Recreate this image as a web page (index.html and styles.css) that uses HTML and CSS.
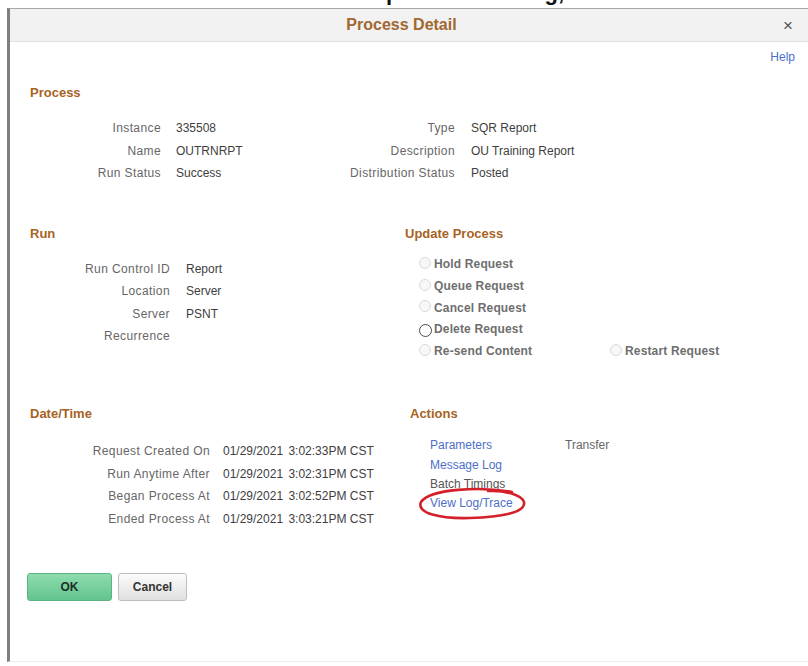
FILE: index.html
```html
<!DOCTYPE html>
<html lang="en">
<head>
<meta charset="utf-8">
<title>Process Detail</title>
<link rel="stylesheet" href="styles.css">
</head>
<body>
<div class="caption"><div class="caption-line"><span class="cap-a">p</span><span class="cap-b">g,</span></div></div>

<div class="dialog">
  <header class="dlg-head">
    <h1 class="dlg-title">Process Detail</h1>
    <button class="close" type="button">&#215;</button>
  </header>

  <div class="dlg-body">
    <div class="help-row"><a class="link" href="#">Help</a></div>

    <section class="process">
      <h2 class="sec-title">Process</h2>
      <div class="process-fields">
        <dl class="fields f-proc-l">
          <dt>Instance</dt><dd>335508</dd>
          <dt>Name</dt><dd>OUTRNRPT</dd>
          <dt>Run Status</dt><dd>Success</dd>
        </dl>
        <dl class="fields f-proc-r">
          <dt>Type</dt><dd>SQR Report</dd>
          <dt>Description</dt><dd>OU Training Report</dd>
          <dt>Distribution Status</dt><dd>Posted</dd>
        </dl>
      </div>
    </section>

    <div class="two-col row-run">
      <section class="run">
        <h2 class="sec-title">Run</h2>
        <dl class="fields f-run">
          <dt>Run Control ID</dt><dd>Report</dd>
          <dt>Location</dt><dd>Server</dd>
          <dt>Server</dt><dd>PSNT</dd>
          <dt>Recurrence</dt><dd></dd>
        </dl>
      </section>
      <section class="update">
        <h2 class="sec-title">Update Process</h2>
        <div class="radios">
          <label class="radio"><span class="dot"></span>Hold Request</label>
          <label class="radio r-full"><span class="dot"></span>Queue Request</label>
          <label class="radio r-full"><span class="dot"></span>Cancel Request</label>
          <label class="radio r-full"><span class="dot on"></span>Delete Request</label>
          <label class="radio"><span class="dot"></span>Re-send Content</label>
          <label class="radio"><span class="dot"></span>Restart Request</label>
        </div>
      </section>
    </div>

    <div class="two-col row-date">
      <section class="datetime">
        <h2 class="sec-title">Date/Time</h2>
        <dl class="fields f-date">
          <dt>Request Created On</dt><dd>01/29/2021 <span class="time">3:02:33PM CST</span></dd>
          <dt>Run Anytime After</dt><dd>01/29/2021 <span class="time">3:02:31PM CST</span></dd>
          <dt>Began Process At</dt><dd>01/29/2021 <span class="time">3:02:52PM CST</span></dd>
          <dt>Ended Process At</dt><dd>01/29/2021 <span class="time">3:03:21PM CST</span></dd>
        </dl>
      </section>
      <section class="actions">
        <h2 class="sec-title">Actions</h2>
        <div class="action-list">
          <a class="link" href="#">Parameters</a><span class="plain">Transfer</span>
          <a class="link" href="#">Message Log</a><span></span>
          <span class="plain dark">Batch Timings</span><span></span>
          <a class="link" href="#">View Log/Trace</a><span></span>
          <svg class="mark" width="114" height="38" viewBox="0 0 114 38" aria-hidden="true">
            <path d="M96 7 C64 1 14 4 5 17 C0 28 24 34 54 33 C84 32 110 28 108 17 C106 10 89 5 72 6" fill="none" stroke="#d4202a" stroke-width="2.6" stroke-linecap="round"/>
          </svg>
        </div>
      </section>
    </div>

    <div class="buttons">
      <button class="btn btn-ok" type="button">OK</button>
      <button class="btn btn-cancel" type="button">Cancel</button>
    </div>
  </div>
</div>
</body>
</html>
```
FILE: styles.css
```css
* { box-sizing: border-box; }

html, body {
  margin: 0;
  padding: 0;
  background: #fff;
}

body {
  width: 808px;
  height: 666px;
  overflow: hidden;
  font-family: "Liberation Sans", Arial, sans-serif;
  font-size: 12px;
  color: #404040;
}

/* clipped line of text above the dialog */
.caption {
  height: 8px;
  overflow: hidden;
  white-space: nowrap;
}
.caption-line {
  font-size: 22px;
  font-weight: bold;
  line-height: 22px;
  margin-top: -18px;
  color: #111;
}
.cap-a { margin-left: 386px; }
.cap-b { margin-left: 145px; }

/* dialog frame */
.dialog {
  margin-left: 7px;
  height: 654px;
  border-left: 3px solid #7f7f7f;
  border-top: 1px solid #a8a8a8;
  border-bottom: 1px solid #ececec;
}

.dlg-head {
  height: 33px;
  display: grid;
  grid-template-columns: 1fr auto 1fr;
  align-items: center;
  padding-right: 15px;
  background: #f2f2f2;
  border-bottom: 1px solid #e1e1e1;
}
.dlg-title {
  grid-column: 2;
  margin: 0;
  font-size: 16px;
  font-weight: bold;
  color: #a0672f;
}
.close {
  grid-column: 3;
  justify-self: end;
  padding: 0;
  border: 0;
  background: none;
  font-family: "Liberation Sans", Arial, sans-serif;
  font-size: 17px;
  line-height: 17px;
  color: #555;
}

.dlg-body {
  padding: 7px 13px 0 20px;
}

.link {
  color: #4d6fc7;
  text-decoration: none;
}

.help-row {
  text-align: right;
  line-height: 16px;
}

.sec-title {
  margin: 0;
  font-size: 13px;
  line-height: 16px;
  font-weight: bold;
  color: #a7631f;
}

/* label / value pairs */
.fields {
  display: grid;
  margin: 0;
  column-gap: 15px;
}
.fields dt {
  text-align: right;
  color: #666;
  letter-spacing: 0.4px;
  white-space: nowrap;
}
.fields dd {
  margin: 0;
  color: #3e3e3e;
  white-space: nowrap;
}
.time { margin-left: 2px; }

.process { margin-top: 20px; }
.process-fields {
  display: flex;
  margin-top: 16px;
}
.f-proc-l {
  width: 310px;
  grid-template-columns: 131px auto;
  line-height: 22.5px;
}
.f-proc-r {
  grid-template-columns: 115px auto;
  column-gap: 16px;
  line-height: 22.5px;
}

.two-col {
  display: grid;
  grid-template-columns: 375px 1fr;
  align-items: start;
}
.row-run { margin-top: 41px; }
.row-date { margin-top: 43px; }

.f-run {
  margin-top: 16px;
  grid-template-columns: 140px auto;
  column-gap: 16px;
  line-height: 22.6px;
}

/* update process radios */
.radios {
  display: grid;
  grid-template-columns: 191px auto;
  margin: 12.6px 0 0 14px;
  line-height: 21.75px;
}
.radio {
  display: flex;
  align-items: center;
  font-weight: bold;
  color: #6e6e6e;
  letter-spacing: 0.15px;
  white-space: nowrap;
}
.r-full { grid-column: 1 / -1; }
.dot {
  width: 12px;
  height: 12px;
  margin-right: 3px;
  border: 1px solid #dcdcdc;
  border-radius: 50%;
  background: #f7f7f7;
  transform: translateY(-2px);
}
.dot.on {
  width: 13px;
  height: 13px;
  border-color: #4a4a4a;
  background: #fff;
  margin-right: 2px;
  transform: none;
}

.f-date {
  margin-top: 18px;
  grid-template-columns: 180px auto;
  column-gap: 13px;
  line-height: 22.7px;
}

.actions { padding-left: 5px; }
.action-list {
  position: relative;
  display: grid;
  grid-template-columns: 135px auto;
  margin: 14.5px 0 0 20px;
  line-height: 19.3px;
}
.plain { color: #666; }
.plain.dark { color: #555; }
.mark {
  position: absolute;
  left: -14px;
  top: 49px;
}

/* footer buttons */
.buttons {
  display: flex;
  gap: 6px;
  margin: 42px 0 0 -3px;
}
.btn {
  height: 28px;
  border-radius: 3px;
  font-family: "Liberation Sans", Arial, sans-serif;
  font-size: 12px;
  font-weight: bold;
  padding: 0;
}
.btn-ok {
  width: 85px;
  color: #1f2f25;
  border: 1px solid #5bb386;
  background: linear-gradient(#8edcae, #62c48f);
}
.btn-cancel {
  width: 69px;
  color: #333;
  border: 1px solid #bdbdbd;
  background: linear-gradient(#fbfbfb, #e0e0e0);
}
```
